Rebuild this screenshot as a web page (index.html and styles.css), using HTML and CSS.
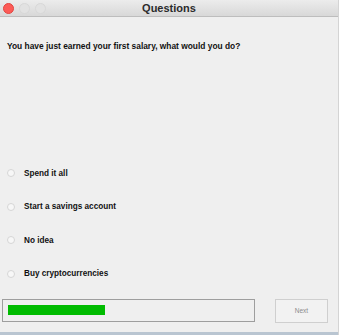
FILE: index.html
```html
<!DOCTYPE html>
<html>
<head>
<meta charset="utf-8">
<link rel="stylesheet" href="styles.css">
</head>
<body>
<div class="window">
  <div class="titlebar">
    <div class="lights">
      <span class="light red"></span>
      <span class="light"></span>
      <span class="light"></span>
    </div>
    <div class="title">Questions</div>
  </div>
  <div class="content">
    <div class="question">You have just earned your first salary, what would you do?</div>
    <div class="options">
      <label class="option"><span class="radio"></span><span>Spend it all</span></label>
      <label class="option"><span class="radio"></span><span>Start a savings account</span></label>
      <label class="option"><span class="radio"></span><span>No idea</span></label>
      <label class="option"><span class="radio"></span><span>Buy cryptocurrencies</span></label>
    </div>
    <div class="footer">
      <div class="progress"><div class="fill" style="width: 97px"></div></div>
      <div class="next">Next</div>
    </div>
  </div>
  <div class="bottom"></div>
</div>
</body>
</html>
```
FILE: styles.css
```css
html, body {
  margin: 0;
  padding: 0;
  background: #efefef;
}
.window {
  width: 339px;
  height: 335px;
  display: flex;
  flex-direction: column;
  font-family: "Liberation Sans", Arial, sans-serif;
  background: #efefef;
  border-right: 1px solid #d4d4d4;
  box-sizing: border-box;
}
.titlebar {
  height: 16px;
  flex: none;
  background: linear-gradient(#ececec, #d8d8d8);
  border-bottom: 1px solid #bdbdbd;
  display: flex;
  align-items: center;
  position: relative;
}
.lights {
  display: flex;
  gap: 5px;
  padding-left: 3px;
  align-items: center;
}
.light {
  width: 11px;
  height: 11px;
  border-radius: 50%;
  background: #e2e2e2;
  box-sizing: border-box;
  border: 1px solid #d8d8d8;
}
.light.red {
  background: #fc5b57;
  border-color: #e24540;
}
.title {
  position: absolute;
  left: 0;
  right: 0;
  top: 0;
  bottom: 0;
  text-align: center;
  font-size: 11px;
  font-weight: bold;
  line-height: 17px;
  color: #2b2b2b;
}
.content {
  flex: 1;
  display: flex;
  flex-direction: column;
  padding: 0 10px 0 2px;
}
.question {
  margin-top: 23px;
  padding-left: 5px;
  font-size: 8.4px;
  font-weight: bold;
  color: #111;
  line-height: 12px;
}
.options {
  margin-top: 115px;
  display: flex;
  flex-direction: column;
  gap: 21.5px;
}
.option {
  display: flex;
  align-items: center;
  height: 12px;
  font-size: 8.2px;
  font-weight: bold;
  color: #111;
}
.radio {
  width: 8px;
  height: 8px;
  border-radius: 50%;
  box-sizing: border-box;
  border: 1px solid #d6d6d6;
  background: #f7f7f7;
  margin-left: 5px;
  margin-right: 9px;
}
.footer {
  margin-top: 19px;
  display: flex;
  align-items: flex-start;
  justify-content: space-between;
}
.progress {
  width: 253px;
  height: 23px;
  box-sizing: border-box;
  border: 1px solid #9e9e9e;
  padding: 5px;
}
.fill {
  height: 10px;
  background: #00bb00;
}
.next {
  width: 53px;
  height: 24px;
  box-sizing: border-box;
  border: 1px solid #cfcfcf;
  background: #f2f2f2;
  font-size: 6.5px;
  color: #8a8a8a;
  display: flex;
  align-items: center;
  justify-content: center;
}
.bottom {
  height: 3px;
  flex: none;
  margin-top: auto;
  background: #b9c5d1;
}
```
